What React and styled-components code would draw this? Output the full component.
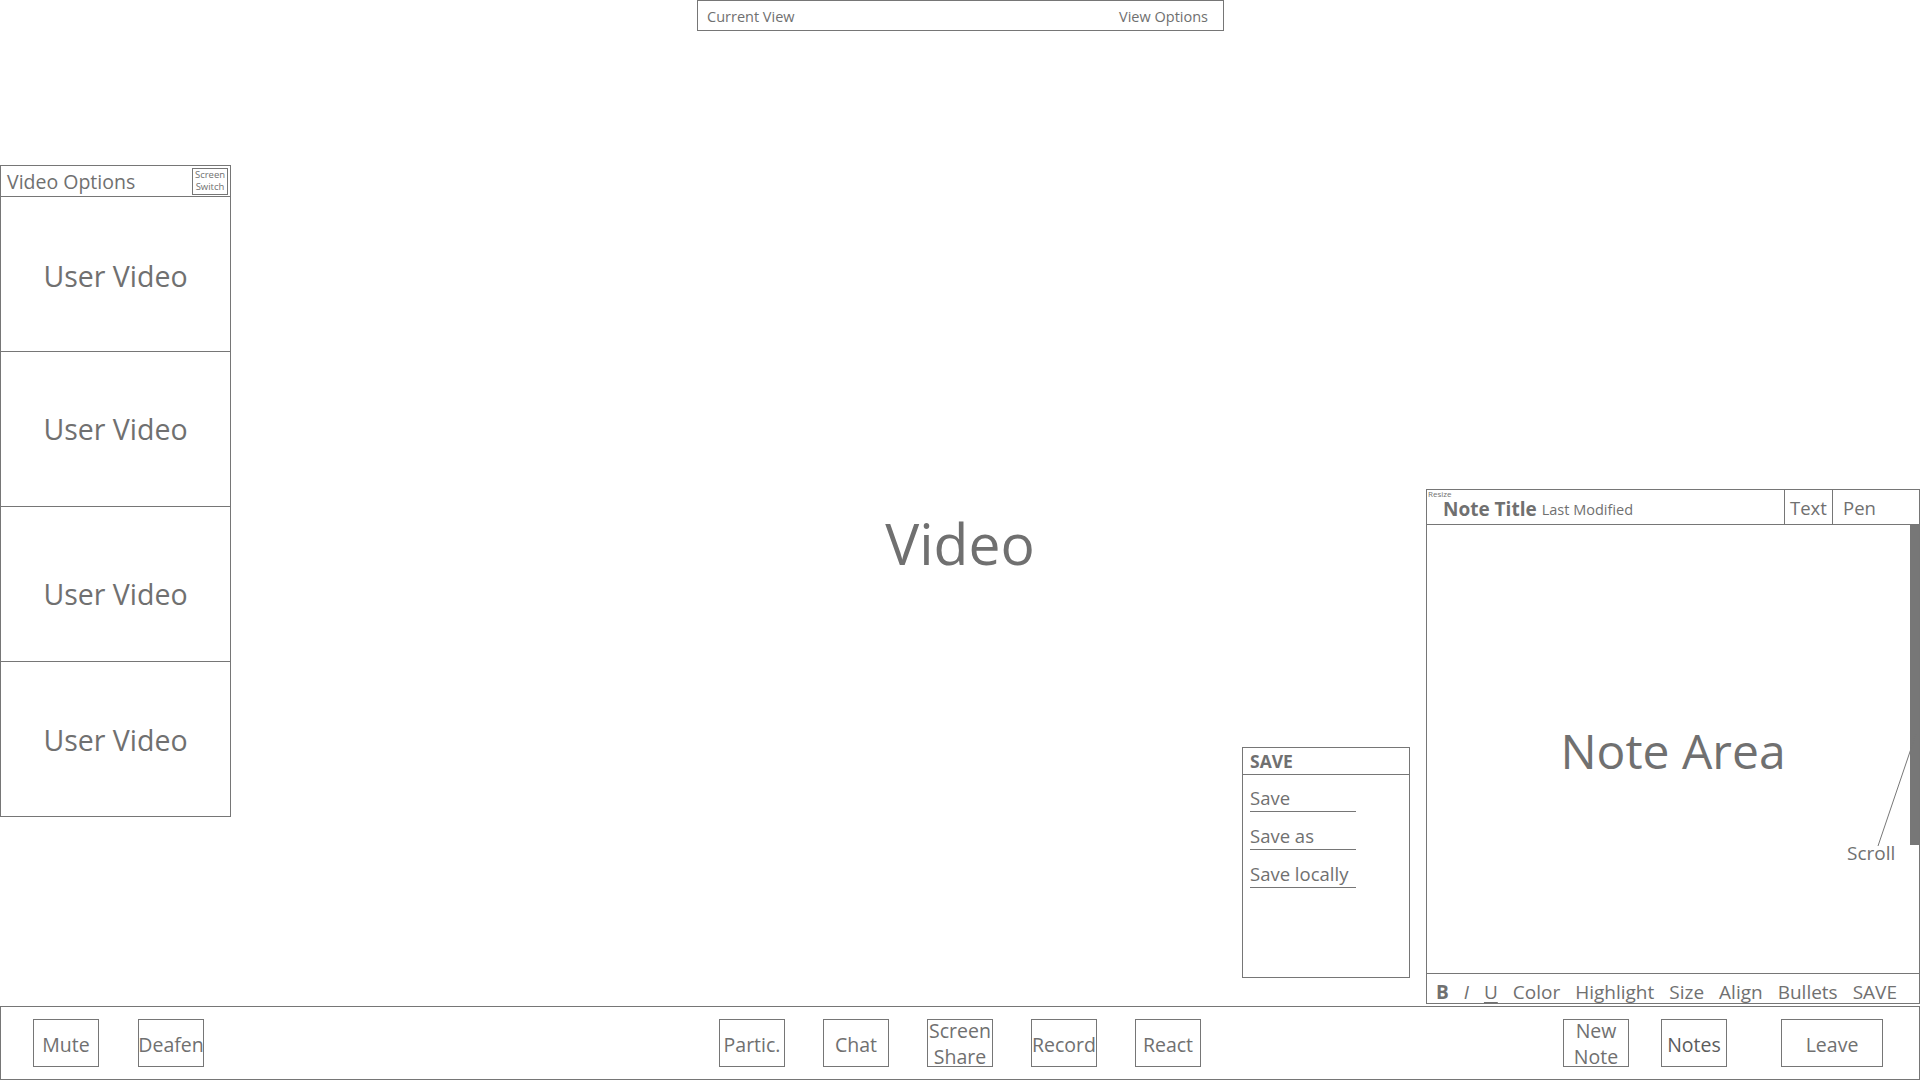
import React from "react";
import styled, { createGlobalStyle } from "styled-components";

const ink = "#707070";
const line = "#767676";

const GlobalStyle = createGlobalStyle`
  body {
    margin: 0;
    background: #fff;
    font-family: "Open Sans", "Noto Sans", sans-serif;
    color: ${ink};
  }
  * { box-sizing: border-box; }
`;

const Page = styled.div`
  width: 1920px;
  height: 1080px;
  display: grid;
  grid-template-rows: 1006px 74px;
  overflow: hidden;
`;

const Stage = styled.div`
  display: grid;
  grid-template: 1fr / 1fr;
  & > * {
    grid-area: 1 / 1;
  }
`;

const TopBar = styled.div`
  align-self: start;
  justify-self: start;
  margin-left: 697px;
  width: 527px;
  height: 31px;
  border: 1px solid ${line};
  display: flex;
  justify-content: space-between;
  align-items: center;
  padding: 1px 15px 0 9px;
  font-size: 14.5px;
`;

const VideoLabel = styled.div`
  align-self: start;
  justify-self: center;
  margin-top: 515px;
  font-size: 57px;
  line-height: 1;
`;

const SidePanel = styled.div`
  align-self: start;
  justify-self: start;
  margin-top: 165px;
  width: 231px;
  border: 1px solid ${line};
  display: flex;
  flex-direction: column;
`;

const PanelHeader = styled.div`
  height: 31px;
  border-bottom: 1px solid ${line};
  display: flex;
  justify-content: space-between;
  align-items: center;
  padding: 0 2px 0 6px;
  font-size: 19.5px;
`;

const SwitchButton = styled.div`
  width: 36px;
  height: 27px;
  border: 1px solid ${line};
  font-size: 9.5px;
  line-height: 12px;
  text-align: center;
  display: flex;
  flex-direction: column;
  justify-content: center;
`;

const UserTile = styled.div`
  height: 155px;
  border-bottom: 1px solid ${line};
  display: flex;
  align-items: center;
  justify-content: center;
  padding-top: ${(p) => p.$shift || 0}px;
  font-size: 28.5px;
  &:last-child {
    border-bottom: none;
    height: 154px;
  }
`;

const NotesPanel = styled.div`
  position: relative;
  align-self: end;
  justify-self: end;
  margin-bottom: 2px;
  width: 494px;
  height: 515px;
  border: 1px solid ${line};
  display: flex;
  flex-direction: column;
`;

const NotesHeader = styled.div`
  height: 35px;
  border-bottom: 1px solid ${line};
  display: flex;
`;

const TitleCell = styled.div`
  position: relative;
  flex: 1;
  display: flex;
  align-items: flex-end;
  gap: 5px;
  padding: 0 0 4px 16px;
`;

const ResizeTag = styled.span`
  position: absolute;
  left: 1px;
  top: 0;
  font-size: 8px;
  line-height: 8px;
`;

const NoteTitle = styled.span`
  font-size: 19px;
  font-weight: 700;
  line-height: 21px;
`;

const Modified = styled.span`
  font-size: 14.5px;
  line-height: 20px;
`;

const ModeTab = styled.div`
  width: ${(p) => p.$w}px;
  border-left: 1px solid ${line};
  display: flex;
  align-items: center;
  padding-left: ${(p) => p.$pad}px;
  font-size: 18.5px;
`;

const NoteBody = styled.div`
  position: relative;
  flex: 1;
  display: grid;
  place-items: center;
`;

const NoteAreaLabel = styled.div`
  font-size: 48px;
  line-height: 1;
  margin-top: 4px;
`;

const ScrollThumb = styled.div`
  position: absolute;
  top: 0;
  right: 0;
  width: 9px;
  height: 320px;
  background: #777;
`;

const ScrollPointer = styled.svg`
  position: absolute;
  left: 0;
  top: 0;
  overflow: visible;
  pointer-events: none;
`;

const ScrollNote = styled.span`
  position: absolute;
  left: 420px;
  top: 315px;
  font-size: 19px;
`;

const NoteToolbar = styled.div`
  height: 30px;
  border-top: 1px solid ${line};
  display: flex;
  align-items: flex-end;
  gap: 15px;
  padding: 0 0 0 9px;
  font-size: 19px;
  line-height: 22px;
`;

const ToolItem = styled.span`
  font-weight: ${(p) => (p.$bold ? 700 : 400)};
  font-style: ${(p) => (p.$italic ? "italic" : "normal")};
  text-decoration: ${(p) => (p.$under ? "underline" : "none")};
  text-underline-offset: 3px;
  text-decoration-thickness: 1px;
`;

const SaveMenu = styled.div`
  position: absolute;
  right: calc(100% + 17px);
  top: 257px;
  width: 168px;
  height: 231px;
  border: 1px solid ${line};
`;

const SaveHead = styled.div`
  height: 27px;
  border-bottom: 1px solid ${line};
  padding-left: 7px;
  font-size: 17.5px;
  font-weight: 700;
  line-height: 27px;
`;

const SaveList = styled.div`
  display: flex;
  flex-direction: column;
  padding: 10px 0 0 7px;
  gap: 11px;
`;

const SaveItem = styled.div`
  width: 106px;
  border-bottom: 1px solid ${line};
  font-size: 18.5px;
  line-height: 26px;
  white-space: nowrap;
`;

const CallBar = styled.div`
  border: 1px solid ${line};
  display: grid;
  grid-template-columns: 1fr auto 1fr;
  align-items: center;
`;

const BarGroup = styled.div`
  display: flex;
  gap: ${(p) => p.$gap}px;
  justify-self: ${(p) => p.$side};
  padding: ${(p) => p.$pad || 0};
`;

const CallButton = styled.div`
  width: ${(p) => p.$w || 66}px;
  height: 48px;
  margin-left: ${(p) => p.$push || 0}px;
  border: 1px solid ${line};
  display: flex;
  flex-direction: column;
  align-items: center;
  justify-content: center;
  padding-top: ${(p) => (p.$stack ? 2 : 3)}px;
  font-size: 19.5px;
  line-height: ${(p) => (p.$stack ? 26 : 22)}px;
  white-space: nowrap;
  color: ${(p) => (p.$active ? "#5c5c5c" : ink)};
  font-weight: ${(p) => (p.$active ? 500 : 400)};
`;

export default function App() {
  return (
    <Page>
      <GlobalStyle />
      <Stage>
        <VideoLabel>Video</VideoLabel>

        <TopBar>
          <span>Current View</span>
          <span>View Options</span>
        </TopBar>

        <SidePanel>
          <PanelHeader>
            <span>Video Options</span>
            <SwitchButton>
              <span>Screen</span>
              <span>Switch</span>
            </SwitchButton>
          </PanelHeader>
          <UserTile $shift={4}>User Video</UserTile>
          <UserTile>User Video</UserTile>
          <UserTile $shift={20}>User Video</UserTile>
          <UserTile $shift={2}>User Video</UserTile>
        </SidePanel>

        <NotesPanel>
          <SaveMenu>
            <SaveHead>SAVE</SaveHead>
            <SaveList>
              <SaveItem>Save</SaveItem>
              <SaveItem>Save as</SaveItem>
              <SaveItem>Save locally</SaveItem>
            </SaveList>
          </SaveMenu>

          <NotesHeader>
            <TitleCell>
              <ResizeTag>Resize</ResizeTag>
              <NoteTitle>Note Title</NoteTitle>
              <Modified>Last Modified</Modified>
            </TitleCell>
            <ModeTab $w={48} $pad={5}>Text</ModeTab>
            <ModeTab $w={87} $pad={10}>Pen</ModeTab>
          </NotesHeader>

          <NoteBody>
            <NoteAreaLabel>Note Area</NoteAreaLabel>
            <ScrollThumb />
            <ScrollPointer width="1" height="1">
              <line x1="489" y1="209" x2="451" y2="321" stroke="#777" strokeWidth="1" />
            </ScrollPointer>
            <ScrollNote>Scroll</ScrollNote>
          </NoteBody>

          <NoteToolbar>
            <ToolItem $bold>B</ToolItem>
            <ToolItem $italic>I</ToolItem>
            <ToolItem $under>U</ToolItem>
            <ToolItem>Color</ToolItem>
            <ToolItem>Highlight</ToolItem>
            <ToolItem>Size</ToolItem>
            <ToolItem>Align</ToolItem>
            <ToolItem>Bullets</ToolItem>
            <ToolItem>SAVE</ToolItem>
          </NoteToolbar>
        </NotesPanel>
      </Stage>

      <CallBar>
        <BarGroup $side="start" $gap={39} $pad="0 0 0 32px">
          <CallButton>Mute</CallButton>
          <CallButton>Deafen</CallButton>
        </BarGroup>
        <BarGroup $side="center" $gap={38}>
          <CallButton>Partic.</CallButton>
          <CallButton>Chat</CallButton>
          <CallButton $stack>
            <span>Screen</span>
            <span>Share</span>
          </CallButton>
          <CallButton>Record</CallButton>
          <CallButton>React</CallButton>
        </BarGroup>
        <BarGroup $side="end" $gap={32} $pad="0 36px 0 0">
          <CallButton $stack>
            <span>New</span>
            <span>Note</span>
          </CallButton>
          <CallButton $active>Notes</CallButton>
          <CallButton $w={102} $push={22}>Leave</CallButton>
        </BarGroup>
      </CallBar>
    </Page>
  );
}
